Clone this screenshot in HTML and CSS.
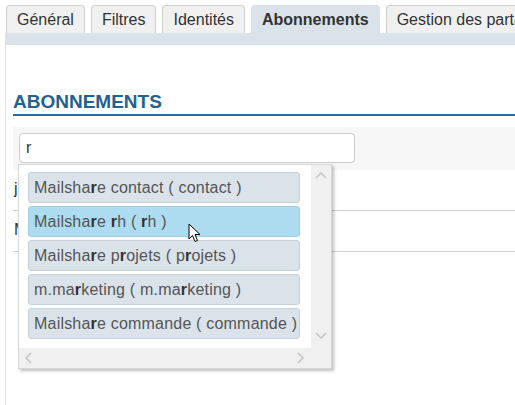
FILE: index.html
```html
<!DOCTYPE html>
<html lang="fr">
<head>
<meta charset="utf-8">
<link rel="stylesheet" href="styles.css">
</head>
<body>
<div class="page">
  <nav class="tabs">
    <div class="tab">Général</div>
    <div class="tab">Filtres</div>
    <div class="tab">Identités</div>
    <div class="tab active">Abonnements</div>
    <div class="tab">Gestion des partages</div>
  </nav>
  <div class="bar"></div>
  <main class="content">
    <h2 class="title">ABONNEMENTS</h2>
    <div class="search-row">
      <div class="input">r</div>
    </div>
    <div class="row">j</div>
    <div class="row">Mailshare</div>
    <div class="dropdown">
      <div class="list">
        <div class="item">Mailsha<b>r</b>e contact ( contact )</div>
        <div class="item hover">Mailsha<b>r</b>e <b>r</b>h ( <b>r</b>h )</div>
        <div class="item">Mailsha<b>r</b>e p<b>r</b>ojets ( p<b>r</b>ojets )</div>
        <div class="item">m.ma<b>r</b>keting ( m.ma<b>r</b>keting )</div>
        <div class="item">Mailsha<b>r</b>e commande ( commande )</div>
      </div>
      <div class="vscroll">
        <svg width="12" height="8" viewBox="0 0 12 8"><path d="M1 7 L6 2 L11 7" fill="none" stroke="#c4c4c4" stroke-width="1.5"/></svg>
        <svg width="12" height="8" viewBox="0 0 12 8"><path d="M1 1 L6 6 L11 1" fill="none" stroke="#c4c4c4" stroke-width="1.5"/></svg>
      </div>
      <div class="hscroll">
        <svg width="8" height="12" viewBox="0 0 8 12"><path d="M7 1 L2 6 L7 11" fill="none" stroke="#c4c4c4" stroke-width="1.5"/></svg>
        <svg width="8" height="12" viewBox="0 0 8 12"><path d="M1 1 L6 6 L1 11" fill="none" stroke="#c4c4c4" stroke-width="1.5"/></svg>
      </div>
    </div>
    <svg class="cursor" width="14" height="21" viewBox="0 0 14 21"><path d="M1 1 L1 16 L4.5 12.5 L7 18.5 L9.5 17.5 L7 11.5 L12 11.5 Z" fill="#fff" stroke="#000" stroke-width="1" stroke-linejoin="round"/></svg>
  </main>
</div>
</body>
</html>
```

FILE: styles.css
```css
html, body {
  margin: 0;
  padding: 0;
  background: #fff;
  font-family: "Liberation Sans", Arial, sans-serif;
  color: #333;
}
.page {
  width: 515px;
  height: 405px;
  overflow: hidden;
}
.tabs {
  display: flex;
  gap: 6px;
  padding: 5px 0 0 6px;
  white-space: nowrap;
}
.tab {
  flex: none;
  height: 27px;
  line-height: 27px;
  padding: 0 10px;
  font-size: 16px;
  color: #333;
  background: #f0f0f0;
  border: 1px solid #cfcfcf;
  border-bottom: none;
  border-radius: 4px 4px 0 0;
}
.tab.active {
  background: #dae3ea;
  font-weight: bold;
  border-color: #dae3ea;
}
.bar {
  height: 12px;
  margin-left: 5px;
  background: #dae3ea;
}
.content {
  position: relative;
  margin-left: 5px;
  border-left: 1px solid #dae3ea;
  height: 360px;
  padding-left: 7px;
}
.title {
  margin: 0;
  padding-top: 46px;
  font-size: 19px;
  line-height: 22px;
  font-weight: bold;
  color: #23618f;
  border-bottom: 2px solid #2b6a99;
  padding-bottom: 1px;
}
.search-row {
  margin-top: 11px;
  background: #f7f7f7;
  padding: 6px 0 7px 6px;
}
.input {
  width: 328px;
  height: 28px;
  line-height: 28px;
  padding-left: 6px;
  background: #fff;
  border: 1px solid #cccccc;
  border-radius: 4px;
  font-size: 16px;
  color: #333;
}
.row {
  height: 40px;
  line-height: 38px;
  border-bottom: 1px solid #cfcfcf;
  font-size: 16px;
  color: #333;
  padding-left: 1px;
}
.dropdown {
  position: absolute;
  left: 12px;
  top: 119px;
  width: 312px;
  height: 203px;
  background: #fff;
  border: 1px solid #d6d6d6;
  box-shadow: 2px 2px 3px rgba(0,0,0,0.25);
  display: grid;
  grid-template-columns: 1fr 20px;
  grid-template-rows: 1fr 20px;
}
.list {
  padding: 7px 0 0 9px;
  overflow: hidden;
  display: flex;
  flex-direction: column;
  gap: 3px;
}
.item {
  width: 265px;
  height: 29px;
  line-height: 29px;
  padding-left: 5px;
  background: #dae3ea;
  border: 1px solid #c8d0d7;
  border-radius: 3px;
  font-size: 16px;
  letter-spacing: 0.2px;
  color: #555;
  white-space: nowrap;
}
.item b {
  color: #333;
}
.item.hover {
  background: #addcf0;
  border-color: #9fcfe4;
}
.vscroll {
  grid-row: 1 / 3;
  grid-column: 2;
  background: #f0f0f0;
  display: flex;
  flex-direction: column;
  justify-content: space-between;
  align-items: center;
  padding: 6px 0 28px;
}
.hscroll {
  grid-row: 2;
  grid-column: 1;
  background: #f0f0f0;
  display: flex;
  justify-content: space-between;
  align-items: center;
  padding: 0 6px 0 5px;
}
.cursor {
  position: absolute;
  left: 182px;
  top: 178px;
}
```
